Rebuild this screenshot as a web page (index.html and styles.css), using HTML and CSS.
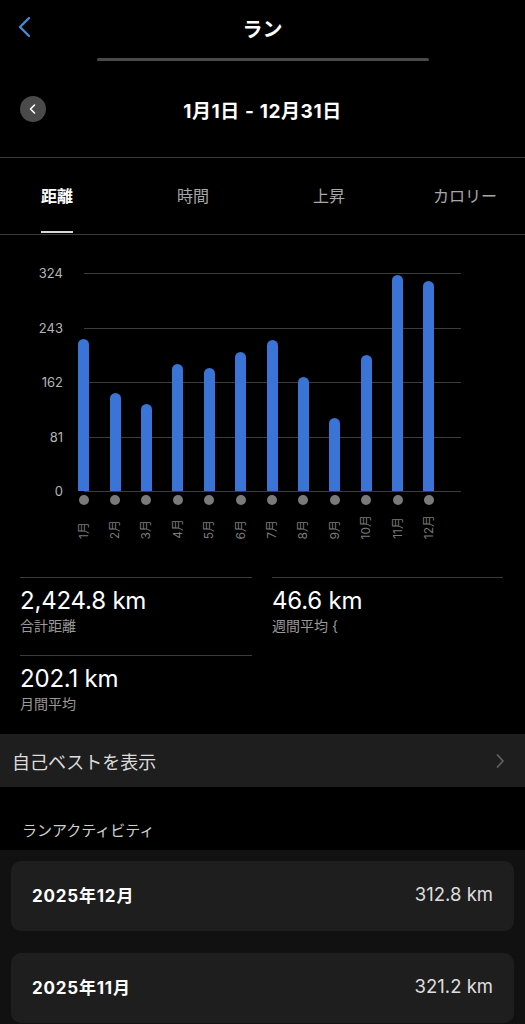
FILE: index.html
```html
<!DOCTYPE html>
<html lang="ja">
<head>
  <meta charset="UTF-8">
  <meta name="viewport" content="width=device-width, initial-scale=1.0">
  <title>ラン</title>
  <link rel="stylesheet" href="styles.css">
</head>
<body>
  <!-- Top bar -->
  <header class="topbar">
    <a class="back" href="#">
      <svg width="14" height="22" viewBox="0 0 14 22"><path d="M12 2 L3 11 L12 20" fill="none" stroke="#4a87d9" stroke-width="2.4" stroke-linecap="round" stroke-linejoin="round"/></svg>
    </a>
    <h1>ラン</h1>
    <span></span>
  </header>
  <div class="handle"></div>

  <!-- Period -->
  <div class="period">
    <button class="round-btn" type="button">
      <svg width="10" height="12" viewBox="0 0 10 12"><path d="M6.5 2 L2.5 6 L6.5 10" fill="none" stroke="#fff" stroke-width="1.6" stroke-linecap="round" stroke-linejoin="round"/></svg>
    </button>
    <div class="period-label">1月1日 - 12月31日</div>
  </div>

  <!-- Tabs -->
  <nav class="tabs">
    <div class="tab active"><span>距離</span></div>
    <div class="tab"><span>時間</span></div>
    <div class="tab"><span>上昇</span></div>
    <div class="tab"><span>カロリー</span></div>
  </nav>

  <!-- Chart -->
  <section class="chart">
    <div class="plot">
      <div class="gridline" style="top: 0%"><span>324</span></div>
      <div class="gridline" style="top: 25%"><span>243</span></div>
      <div class="gridline" style="top: 50%"><span>162</span></div>
      <div class="gridline" style="top: 75%"><span>81</span></div>
      <div class="gridline" style="top: 100%"><span>0</span></div>
      <div class="bars" id="bars"></div>
    </div>
    <div class="dots" id="dots"></div>
    <div class="months" id="months"></div>
  </section>

  <!-- Summary -->
  <section class="stats">
    <div class="stat">
      <div class="stat-value">2,424.8 km</div>
      <div class="stat-label">合計距離</div>
    </div>
    <div class="stat">
      <div class="stat-value">46.6 km</div>
      <div class="stat-label">週間平均 {</div>
    </div>
    <div class="stat">
      <div class="stat-value">202.1 km</div>
      <div class="stat-label">月間平均</div>
    </div>
  </section>

  <a class="best-row" href="#">
    <span>自己ベストを表示</span>
    <svg width="10" height="16" viewBox="0 0 10 16"><path d="M2.5 2 L8 8 L2.5 14" fill="none" stroke="#5f5f5f" stroke-width="1.8" stroke-linecap="round" stroke-linejoin="round"/></svg>
  </a>

  <h2 class="section-title">ランアクティビティ</h2>

  <section class="activities">
    <div class="activity">
      <span class="activity-month">2025年12月</span>
      <span class="activity-km">312.8 km</span>
    </div>
    <div class="activity">
      <span class="activity-month">2025年11月</span>
      <span class="activity-km">321.2 km</span>
    </div>
  </section>

  <script>
    // monthly distance in km
    const monthly = [226, 146, 130, 189, 183, 207, 225, 170, 109, 202, 321.2, 312.8];
    const maxKm = 324;

    const bars = document.getElementById('bars');
    const dots = document.getElementById('dots');
    const months = document.getElementById('months');

    monthly.forEach((km, i) => {
      const col = document.createElement('div');
      col.className = 'bar-col';
      col.innerHTML = `<div class="bar" style="height: ${(km / maxKm * 100).toFixed(2)}%"></div>`;
      bars.appendChild(col);

      const dot = document.createElement('div');
      dot.className = 'dot-col';
      dot.innerHTML = '<span class="dot"></span>';
      dots.appendChild(dot);

      const label = document.createElement('div');
      label.className = 'month-col';
      label.innerHTML = `<span class="month">${i + 1}月</span>`;
      months.appendChild(label);
    });
  </script>
</body>
</html>
```

FILE: styles.css
```css
/* Base */
body {
  margin: 0;
  background-color: #000;
  color: #fff;
  font-family: Inter, "Noto Sans CJK JP", sans-serif;
  width: 525px;
}

a {
  color: inherit;
  text-decoration: none;
}

/* Top bar */
.topbar {
  display: grid;
  grid-template-columns: 60px 1fr 60px;
  align-items: center;
  height: 56px;
}

.back {
  display: flex;
  padding-left: 17px;
  margin-top: -2px;
}

.topbar h1 {
  margin: 0;
  text-align: center;
  font-size: 20px;
  font-weight: 700;
  margin-top: 0;
}

.handle {
  width: 332px;
  height: 3px;
  margin: 2px auto 0;
  background-color: #4a4a4a;
  border-radius: 2px;
}

/* Period */
.period {
  position: relative;
  display: flex;
  align-items: center;
  justify-content: center;
  height: 40px;
  margin-top: 28px;
}

.round-btn {
  position: absolute;
  left: 20px;
  top: 7px;
  width: 26px;
  height: 26px;
  border-radius: 50%;
  border: none;
  padding: 0;
  background-color: #4a4a4a;
  display: flex;
  align-items: center;
  justify-content: center;
}

.period-label {
  font-size: 19px;
  font-weight: 700;
  letter-spacing: 0.6px;
}

/* Tabs */
.tabs {
  display: grid;
  grid-template-columns: repeat(4, 136px);
  margin-top: 28px;
  margin-left: -11px;
  width: 547px;
  border-top: 1px solid #3a3a3a;
  border-bottom: 1px solid #3a3a3a;
  height: 76px;
}

.tab {
  display: flex;
  justify-content: center;
  align-items: center;
  font-size: 16px;
  color: #a8a8a8;
}

.tab span {
  position: relative;
  margin-top: -3px;
}

.tab.active {
  color: #fff;
  font-weight: 700;
}

.tab.active span::after {
  content: "";
  position: absolute;
  left: 0;
  right: 0;
  bottom: -26px;
  height: 2px;
  background-color: #d8d8d8;
}

/* Chart */
.chart {
  padding-top: 38px;
}

.plot {
  position: relative;
  height: 218px;
  margin-left: 68px;
  width: 393px;
}

.gridline {
  position: absolute;
  left: 16px;
  right: 0;
  height: 1px;
  background-color: #3c3c3c;
}

.gridline span {
  position: absolute;
  right: calc(100% + 21px);
  top: -8px;
  font-size: 13px;
  color: #b5b5b5;
  line-height: 16px;
}

.bars {
  position: relative;
  display: flex;
  align-items: flex-end;
  height: 100%;
}

.bar-col,
.dot-col,
.month-col {
  width: 31.4px;
  flex: none;
  display: flex;
  justify-content: center;
}

.bar-col {
  height: 100%;
  align-items: flex-end;
}

.bar {
  width: 11px;
  background-color: #3a74d6;
  border-radius: 5.5px 5.5px 0 0;
}

.dots {
  display: flex;
  margin-left: 68px;
  margin-top: 4px;
}

.dot {
  width: 10px;
  height: 10px;
  border-radius: 50%;
  background-color: #7a7a7a;
}

.months {
  display: flex;
  margin-left: 68px;
  height: 34px;
  align-items: flex-end;
}

.month {
  writing-mode: vertical-rl;
  text-orientation: sideways;
  transform: rotate(180deg);
  font-size: 12px;
  color: #7c7c7c;
  line-height: 12px;
}

/* Summary */
.stats {
  display: grid;
  grid-template-columns: 232px 231px;
  column-gap: 20px;
  padding-left: 20px;
  margin-top: 38px;
}

.stat {
  border-top: 1px solid #3a3a3a;
  padding-top: 9px;
  height: 68px;
}

.stat-value {
  font-size: 24px;
  line-height: 28px;
  letter-spacing: -0.2px;
}

.stat-label {
  font-size: 14px;
  line-height: 20px;
  color: #9a9a9a;
  margin-top: 1px;
}

/* Best row */
.best-row {
  display: flex;
  align-items: center;
  justify-content: space-between;
  height: 53px;
  margin-top: 1px;
  padding: 0 20px 0 12px;
  background-color: #1e1e1e;
  font-size: 18px;
  color: #dcdcdc;
}

.section-title {
  margin: 0;
  padding: 32px 22px 10px;
  font-size: 15px;
  font-weight: 400;
  color: #cfcfcf;
}

/* Activities */
.activities {
  background-color: #111;
  padding: 11px 11px 4px;
  display: flex;
  flex-direction: column;
  gap: 22px;
}

.activity {
  display: flex;
  justify-content: space-between;
  align-items: center;
  height: 70px;
  padding: 0 21px;
  border-radius: 10px;
  background-color: #1e1e1e;
}

.activity-month {
  font-size: 17px;
  font-weight: 700;
  letter-spacing: 0.8px;
  margin-top: -3px;
}

.activity-km {
  font-size: 18.5px;
  color: #dedede;
  margin-top: -5px;
}
```
